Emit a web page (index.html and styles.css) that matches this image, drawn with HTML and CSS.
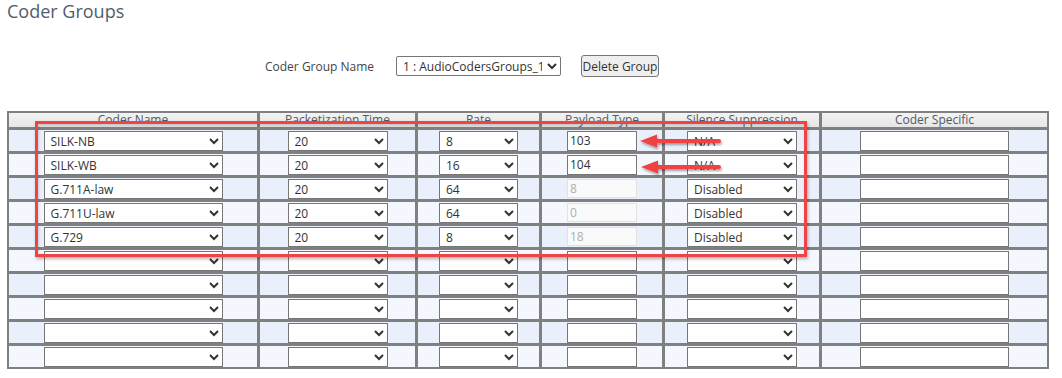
FILE: index.html
```html
<!DOCTYPE html>
<html>
<head>
<meta charset="utf-8">
<link rel="stylesheet" href="styles.css">
</head>
<body>
<div class="page">
  <h1 class="title">Coder Groups</h1>
  <div class="group-row">
    <span class="group-label">Coder Group Name</span>
    <select class="group-select"><option>1 : AudioCodersGroups_1</option></select>
    <button class="btn">Delete Group</button>
  </div>

  <div class="grid">
    <div class="hd">Coder Name</div>
    <div class="hd">Packetization Time</div>
    <div class="hd">Rate</div>
    <div class="hd">Payload Type</div>
    <div class="hd">Silence Suppression</div>
    <div class="hd">Coder Specific</div>

    <div class="c odd"><select class="s-name"><option>SILK-NB</option></select></div>
    <div class="c odd"><select class="s-ptime"><option>20</option></select></div>
    <div class="c odd"><select class="s-rate"><option>8</option></select></div>
    <div class="c odd"><input class="i-pt" value="103"></div>
    <div class="c odd"><select class="s-sil"><option>N/A</option></select></div>
    <div class="c odd"><input class="i-spec"></div>

    <div class="c even"><select class="s-name"><option>SILK-WB</option></select></div>
    <div class="c even"><select class="s-ptime"><option>20</option></select></div>
    <div class="c even"><select class="s-rate"><option>16</option></select></div>
    <div class="c even"><input class="i-pt" value="104"></div>
    <div class="c even"><select class="s-sil"><option>N/A</option></select></div>
    <div class="c even"><input class="i-spec"></div>

    <div class="c odd"><select class="s-name"><option>G.711A-law</option></select></div>
    <div class="c odd"><select class="s-ptime"><option>20</option></select></div>
    <div class="c odd"><select class="s-rate"><option>64</option></select></div>
    <div class="c odd"><input class="i-pt" value="8" disabled></div>
    <div class="c odd"><select class="s-sil"><option>Disabled</option></select></div>
    <div class="c odd"><input class="i-spec"></div>

    <div class="c even"><select class="s-name"><option>G.711U-law</option></select></div>
    <div class="c even"><select class="s-ptime"><option>20</option></select></div>
    <div class="c even"><select class="s-rate"><option>64</option></select></div>
    <div class="c even"><input class="i-pt" value="0" disabled></div>
    <div class="c even"><select class="s-sil"><option>Disabled</option></select></div>
    <div class="c even"><input class="i-spec"></div>

    <div class="c odd"><select class="s-name"><option>G.729</option></select></div>
    <div class="c odd"><select class="s-ptime"><option>20</option></select></div>
    <div class="c odd"><select class="s-rate"><option>8</option></select></div>
    <div class="c odd"><input class="i-pt" value="18" disabled></div>
    <div class="c odd"><select class="s-sil"><option>Disabled</option></select></div>
    <div class="c odd"><input class="i-spec"></div>

    <div class="c even"><select class="s-name"><option></option></select></div>
    <div class="c even"><select class="s-ptime"><option></option></select></div>
    <div class="c even"><select class="s-rate"><option></option></select></div>
    <div class="c even"><input class="i-pt"></div>
    <div class="c even"><select class="s-sil"><option></option></select></div>
    <div class="c even"><input class="i-spec"></div>

    <div class="c odd"><select class="s-name"><option></option></select></div>
    <div class="c odd"><select class="s-ptime"><option></option></select></div>
    <div class="c odd"><select class="s-rate"><option></option></select></div>
    <div class="c odd"><input class="i-pt"></div>
    <div class="c odd"><select class="s-sil"><option></option></select></div>
    <div class="c odd"><input class="i-spec"></div>

    <div class="c even"><select class="s-name"><option></option></select></div>
    <div class="c even"><select class="s-ptime"><option></option></select></div>
    <div class="c even"><select class="s-rate"><option></option></select></div>
    <div class="c even"><input class="i-pt"></div>
    <div class="c even"><select class="s-sil"><option></option></select></div>
    <div class="c even"><input class="i-spec"></div>

    <div class="c odd"><select class="s-name"><option></option></select></div>
    <div class="c odd"><select class="s-ptime"><option></option></select></div>
    <div class="c odd"><select class="s-rate"><option></option></select></div>
    <div class="c odd"><input class="i-pt"></div>
    <div class="c odd"><select class="s-sil"><option></option></select></div>
    <div class="c odd"><input class="i-spec"></div>

    <div class="c even"><select class="s-name"><option></option></select></div>
    <div class="c even"><select class="s-ptime"><option></option></select></div>
    <div class="c even"><select class="s-rate"><option></option></select></div>
    <div class="c even"><input class="i-pt"></div>
    <div class="c even"><select class="s-sil"><option></option></select></div>
    <div class="c even"><input class="i-spec"></div>
  </div>
</div>

<div class="highlight"></div>
<svg class="arrows" width="1062" height="378" viewBox="0 0 1062 378">
  <defs>
    <filter id="sh" x="-20%" y="-50%" width="140%" height="200%">
      <feDropShadow dx="1" dy="2" stdDeviation="1.2" flood-color="#000" flood-opacity="0.35"/>
    </filter>
  </defs>
  <g fill="#f04343" stroke="#f04343" filter="url(#sh)">
    <line x1="654" y1="141" x2="719" y2="141" stroke-width="4" stroke-linecap="round"/>
    <polygon points="640,141 657,134.5 657,147.5" stroke="none"/>
    <line x1="655" y1="167" x2="719" y2="167" stroke-width="4" stroke-linecap="round"/>
    <polygon points="641,167 658,160.5 658,173.5" stroke="none"/>
  </g>
</svg>
</body>
</html>
```
FILE: styles.css
```css
html, body {
  margin: 0;
  padding: 0;
  background: #ffffff;
}
body {
  position: relative;
  width: 1062px;
  height: 378px;
  overflow: hidden;
  font-family: "Open Sans", "Liberation Sans", sans-serif;
  color: #333;
}
.page {
  padding: 0 7px;
}
.title {
  margin: 0;
  font-size: 18px;
  font-weight: normal;
  line-height: 22px;
  color: #4f5d6e;
}
.group-row {
  display: flex;
  align-items: center;
  height: 22px;
  margin-top: 33px;
  padding-left: 258px;
}
.group-label {
  width: 131px;
  font-size: 12px;
  color: #444;
}
.group-select {
  width: 165px;
  height: 20px;
  box-sizing: border-box;
  font: 12px "Open Sans", sans-serif;
  color: #333;
  border: 1px solid #767676;
  border-radius: 2px;
  background: #fff;
  padding: 0 2px;
  margin: 0;
}
.btn {
  margin: 0 0 0 20px;
  width: 78px;
  height: 22px;
  box-sizing: border-box;
  padding: 0;
  font: 12px "Open Sans", sans-serif;
  color: #333;
  background: #efefef;
  border: 1px solid #767676;
  border-radius: 3px;
}
.grid {
  margin-top: 34px;
  display: grid;
  grid-template-columns: 248px 155px 121px 120px 154px 225px;
  grid-template-rows: 14px repeat(10, 21px);
  gap: 3px;
  width: 1038px;
  background: #808080;
  border: 2px solid #808080;
}
.hd {
  background: linear-gradient(#f3f3f3, #e6e6e6);
  font-size: 12px;
  line-height: 14px;
  color: #505a66;
  text-align: center;
  white-space: nowrap;
}
.c {
  display: flex;
  align-items: center;
  justify-content: center;
}
.odd { background: #e9f0fb; }
.even { background: #f4f8fe; }

.c select, .c input {
  box-sizing: border-box;
  height: 20px;
  margin: 0;
  font: 12px "Open Sans", sans-serif;
  color: #333;
  background: #fff;
  border: 1px solid #767676;
  border-radius: 0;
}
.c select { padding: 0 2px; }
.c input { padding: 0 2px; outline: none; }
.c input:disabled {
  height: 19px;
  color: #a9b0b8;
  background: #fafafa;
  border-color: #e2e2e2;
}
.s-name { width: 179px; }
.s-ptime { width: 100px; }
.s-rate { width: 79px; }
.i-pt { width: 70px; }
.s-sil { width: 110px; }
.i-spec { width: 149px; }

.highlight {
  position: absolute;
  left: 35px;
  top: 121px;
  width: 772px;
  height: 136px;
  box-sizing: border-box;
  border: 3px solid #f04343;
  box-shadow: 1px 2px 3px rgba(0,0,0,0.3), inset 1px 2px 3px rgba(0,0,0,0.15);
  pointer-events: none;
}
.arrows {
  position: absolute;
  left: 0;
  top: 0;
  pointer-events: none;
}
```
